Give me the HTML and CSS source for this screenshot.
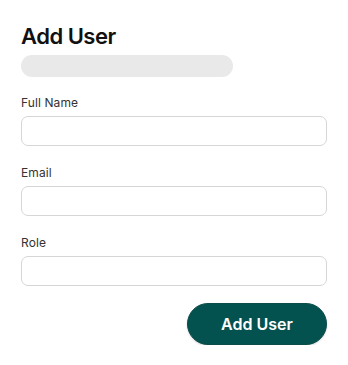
FILE: index.html
```html
<!DOCTYPE html>
<html>
<head>
<meta charset="utf-8">
<link rel="stylesheet" href="styles.css">
</head>
<body>
<div class="panel">
  <h1 class="title">Add User</h1>
  <div class="skeleton"></div>
  <form class="form">
    <div class="field">
      <label class="label">Full Name</label>
      <input class="input" type="text">
    </div>
    <div class="field">
      <label class="label">Email</label>
      <input class="input" type="text">
    </div>
    <div class="field">
      <label class="label">Role</label>
      <input class="input" type="text">
    </div>
    <div class="actions">
      <button class="btn" type="button">Add User</button>
    </div>
  </form>
</div>
</body>
</html>
```
FILE: styles.css
```css
html, body {
  margin: 0;
  padding: 0;
  background: #ffffff;
}
body {
  font-family: Inter, "Noto Sans", sans-serif;
  color: #1a1a1a;
}
.panel {
  padding: 23px 21px 0 21px;
  width: 306px;
}
.title {
  margin: 0;
  font-size: 22px;
  line-height: 26px;
  font-weight: 600;
  color: #111;
  letter-spacing: -0.5px;
}
.skeleton {
  margin-top: 6px;
  width: 212px;
  height: 22px;
  border-radius: 11px;
  background: #e9e9e9;
}
.form {
  margin-top: 18px;
  display: flex;
  flex-direction: column;
  gap: 19px;
}
.field {
  display: flex;
  flex-direction: column;
  gap: 6px;
}
.label {
  font-size: 12px;
  line-height: 15px;
  color: #333;
  letter-spacing: 0.1px;
}
.input {
  box-sizing: border-box;
  height: 30px;
  width: 100%;
  border: 1px solid #d6d6d6;
  border-radius: 7px;
  background: #fff;
  margin: 0;
  padding: 0 10px;
  font: inherit;
}
.actions {
  display: flex;
  justify-content: flex-end;
  margin-top: -2px;
}
.btn {
  box-sizing: border-box;
  width: 140px;
  height: 42px;
  border-radius: 21px;
  border: 1px solid #0b4d4a;
  background: #04524f;
  color: #fff;
  font-family: Inter, "Noto Sans", sans-serif;
  font-size: 16px;
  font-weight: 600;
  padding: 0;
  box-shadow: 0 1px 2px rgba(0,0,0,0.15);
}
```
